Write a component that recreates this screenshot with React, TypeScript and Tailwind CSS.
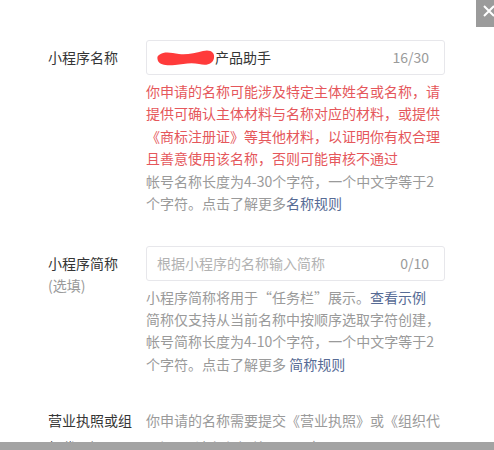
import React from 'react';

const font = { fontFamily: '"Noto Sans CJK SC", "Liberation Sans", sans-serif' };

function Blob() {
  return (
    <svg width="58" height="18" viewBox="0 0 58 18" className="inline-block align-middle -mt-[2px]">
      <path
        d="M2 6 C8 2 14 4 22 5 C30 6 38 4 46 2 C54 0 58 4 57 9 C56 15 50 17 42 15 C34 13 26 15 18 16 C10 17 3 16 1 12 C0 9 0 7 2 6 Z"
        fill="#ff3b3b"
      />
    </svg>
  );
}

function Label({ children, sub }: { children: React.ReactNode; sub?: string }) {
  return (
    <div className="w-[88px] mr-[10px] shrink-0 pt-[6px] text-[14px] leading-[22px] text-[#353535]">
      <div>{children}</div>
      {sub && <div className="text-[#9a9a9a]">{sub}</div>}
    </div>
  );
}

export default function App() {
  return (
    <div className="relative w-[494px] h-[450px] overflow-hidden bg-white" style={font}>
      {/* close button, mostly off screen */}
      <div className="absolute top-0 right-0 w-[18px] h-[27px] bg-[#9b9b9b] overflow-hidden">
        <svg width="18" height="27" viewBox="0 0 18 27" className="absolute left-0 top-0">
          <path d="M8 6 L18 16 M18 6 L8 16" stroke="#fff" strokeWidth="2" fill="none" />
        </svg>
      </div>

      <div className="pt-[40px] pl-[48px] pr-[49px]">
        {/* name */}
        <div className="flex">
          <Label>小程序名称</Label>
          <div className="flex-1">
            <div className="h-[35px] border border-[#e7e7eb] rounded-[3px] flex items-center pl-[10px] pr-[15px] text-[14px]">
              <span className="flex-1 text-[#353535] whitespace-nowrap">
                <Blob />产品助手
              </span>
              <span className="text-[#9a9a9a]">16/30</span>
            </div>
            <p className="mt-[5px] text-[14px] leading-[22.3px] text-[#e5575b]">
              你申请的名称可能涉及特定主体姓名或名称，请提供可确认主体材料与名称对应的材料，或提供《商标注册证》等其他材料，以证明你有权合理且善意使用该名称，否则可能审核不通过
            </p>
            <p className="mt-[1px] text-[14px] leading-[22.3px] text-[#9a9a9a]">
              帐号名称长度为4-30个字符，一个中文字等于2个字符。点击了解更多<a className="text-[#576b95]">名称规则</a>
            </p>
          </div>
        </div>

        {/* short name */}
        <div className="flex mt-[31px]">
          <Label sub="(选填)">小程序简称</Label>
          <div className="flex-1">
            <div className="h-[35px] border border-[#e7e7eb] rounded-[3px] flex items-center pl-[10px] pr-[15px] text-[14px]">
              <span className="flex-1 text-[#b2b2b2]">根据小程序的名称输入简称</span>
              <span className="text-[#9a9a9a]">0/10</span>
            </div>
            <p className="mt-[5px] text-[14px] leading-[22.3px] text-[#9a9a9a]">
              小程序简称将用于“任务栏”展示。<a className="text-[#576b95]">查看示例</a>
              <br />
              简称仅支持从当前名称中按顺序选取字符创建，帐号简称长度为4-10个字符，一个中文字等于2个字符。点击了解更多 <a className="text-[#576b95]">简称规则</a>
            </p>
          </div>
        </div>

        {/* license */}
        <div className="flex mt-[32px]">
          <div className="w-[88px] mr-[10px] shrink-0 text-[14px] leading-[27px] text-[#353535]">
            营业执照或组织代码证
          </div>
          <p className="flex-1 text-[14px] leading-[27px] text-[#9a9a9a]">
            你申请的名称需要提交《营业执照》或《组织代码证》，请务必加盖公司公章
          </p>
        </div>
      </div>

      {/* bottom bar */}
      <div className="absolute left-0 right-0 bottom-0 h-[8px] bg-[#a3a3a3]" />
    </div>
  );
}
